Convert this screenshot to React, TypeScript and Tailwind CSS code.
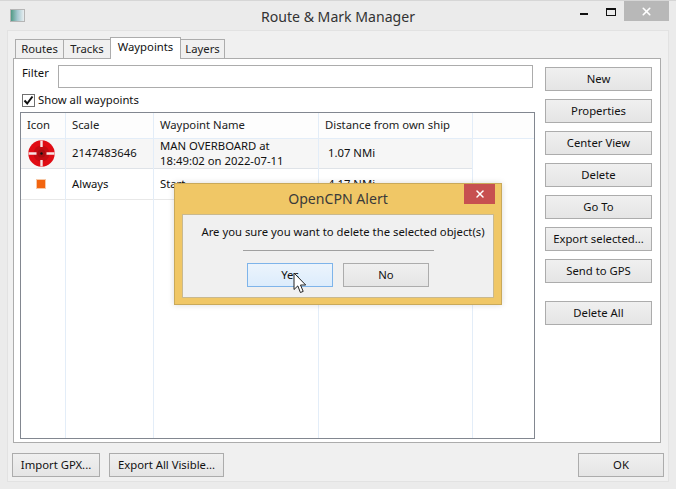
import { X } from "lucide-react";

const sideButtons = [
  { label: "New", top: "mt-0" },
  { label: "Properties", top: "mt-2" },
  { label: "Center View", top: "mt-2" },
  { label: "Delete", top: "mt-2" },
  { label: "Go To", top: "mt-2" },
  { label: "Export selected...", top: "mt-2" },
  { label: "Send to GPS", top: "mt-2" },
  { label: "Delete All", top: "mt-[18px]" },
];

function Btn({ label, className = "" }: { label: string; className?: string }) {
  return (
    <button className={`h-6 flex items-center justify-center border border-[#acacac] bg-gradient-to-b from-[#f0f0f0] to-[#e5e5e5] text-[11.3px] text-[#111] ${className}`}>
      {label}
    </button>
  );
}

function Tab({ label, active, className }: { label: string; active?: boolean; className: string }) {
  return (
    <div
      className={`flex items-center justify-center border border-[#acacac] text-[11.3px] -ml-px first:ml-0 ${
        active ? "h-[22px] bg-white border-b-0 relative z-10 pb-[3px] text-[#111]" : "h-5 bg-[#f0f0f0] text-[#222]"
      } ${className}`}
    >
      {label}
    </div>
  );
}

function Lifebuoy() {
  return (
    <svg width="27" height="27" viewBox="0 0 27 27" className="-mt-[1px]">
      <circle cx="13.5" cy="13.5" r="13.2" fill="#e00c14" />
      <circle cx="13.5" cy="13.5" r="8" fill="#c40c12" />
      <circle cx="13.5" cy="13.5" r="4" fill="#a90d10" />
      <path d="M.5 12.3h8v2.4h-8zM18.5 12.3h8v2.4h-8zM12.3.5h2.4v6.5h-2.4zM12.3 20h2.4v6.5h-2.4z" fill="#f6e4e4" />
      <circle cx="13.5" cy="13.5" r="1.2" fill="#111" />
    </svg>
  );
}

function Cursor() {
  return (
    <svg width="14" height="23" viewBox="0 0 14 23" className="absolute left-[293px] top-[272px] z-30">
      <path
        d="M1 1v16.5l3.8-3.6 2.6 6.6 2.8-1.1-2.7-6.4h5.2z"
        fill="#fff"
        stroke="#222"
        strokeWidth="1"
        strokeLinejoin="round"
      />
    </svg>
  );
}

const columns = [
  {
    head: "Icon",
    width: "w-[45px]",
    cells: [
      <div className="w-full flex justify-center pr-[4px]"><Lifebuoy /></div>,
      <div className="w-full flex justify-center pr-[4px]"><div className="w-2 h-2 bg-[#f2640f] outline outline-1 outline-[#f7c9a8]" /></div>,
    ],
  },
  { head: "Scale", width: "w-[88px]", cells: [<span className="pl-[6px]">2147483646</span>, <span className="pl-[6px]">Always</span>] },
  {
    head: "Waypoint Name",
    width: "w-[165px]",
    cells: [
      <span className="pl-[6px] leading-[15px] -mt-[1px]">MAN OVERBOARD at<br />18:49:02 on 2022-07-11</span>,
      <span className="pl-[6px]">Start</span>,
    ],
  },
  { head: "Distance from own ship", width: "w-[154px]", cells: [<span className="pl-[9px]">1.07 NMi</span>, <span className="pl-[9px]">4.17 NMi</span>] },
];

export default function App() {
  return (
    <div className="relative w-[676px] h-[489px] flex flex-col bg-[#ebebeb] overflow-hidden text-[#111] font-['Noto_Sans','Open_Sans',sans-serif]">
      {/* title bar */}
      <div className="h-[30px] flex-shrink-0 relative flex items-start justify-center border-t border-[#d6d6d6]">
        <div className="absolute left-[10px] top-[8px] w-[15px] h-[13px] border border-[#b5b5b5] bg-gradient-to-r from-[#4f9a86] via-[#a5c8d0] to-[#e8eef0]" />
        <span className="text-[14.1px] mt-[5px] text-[#333]">Route &amp; Mark Manager</span>
        <div className="absolute left-[580px] top-[12px] w-2 h-[2px] bg-[#111]" />
        <div className="absolute left-[606px] top-[7px] w-[10px] h-2 border border-[#111] border-t-2" />
        <div className="absolute left-[624px] top-0 w-[45px] h-[20px] bg-[#b8b8b8] flex items-center justify-center">
          <X size={13} strokeWidth={3} color="#fff" />
        </div>
      </div>

      {/* panel */}
      <div className="flex-1 mx-[7px] mb-[7px] bg-[#f0f0f0] border border-[#e2e2e2] pt-[7px] px-[5px] flex flex-col">
        <div className="flex items-end h-[21px] pl-[2px] relative">
          <Tab label="Routes" className="w-[49px]" />
          <Tab label="Tracks" className="w-[48px]" />
          <Tab label="Waypoints" active className="w-[71px]" />
          <Tab label="Layers" className="w-[45px]" />
        </div>

        <div className="h-[385px] w-[648px] border border-[#acacac] bg-white -mt-px ml-0 flex pl-[6px] pt-[6px]">
          <div className="w-[515px] flex flex-col">
            <div className="flex items-center h-[23px]">
              <span className="w-[38px] pl-[2px] text-[11.3px] -mt-[6px]">Filter</span>
              <div className="w-[475px] h-[23px] border border-[#acacac] bg-white" />
            </div>
            <div className="flex items-center h-[15px] mt-[5px] ml-[2px]">
              <div className="w-[13px] h-[13px] border border-[#707070] bg-white flex items-center justify-center">
                <svg width="11" height="11" viewBox="0 0 11 11">
                  <path d="M1.5 5.5 4.2 8.5 9.5 1.5" fill="none" stroke="#111" strokeWidth="2" />
                </svg>
              </div>
              <span className="text-[11.3px] ml-[3px]">Show all waypoints</span>
            </div>
            <div className="mt-[4px] h-[327px] w-[515px] border border-[#828790] flex bg-white">
              {columns.map((col) => (
                <div key={col.head} className={`${col.width} flex flex-col border-r border-[#e3edf8] text-[11.3px]`}>
                  <div className="h-[26px] flex items-center pl-[6px] border-b border-[#e3edf8] text-[#222] bg-[#fdfdfd]">{col.head}</div>
                  <div className="h-[30px] flex items-center bg-[#f6f6f6] border-b border-[#dfe3e8]">{col.cells[0]}</div>
                  <div className="h-[31px] flex items-center border-b border-[#e8e8e8]">{col.cells[1]}</div>
                </div>
              ))}
              <div className="flex-1">
                <div className="h-[26px] border-b border-[#e3edf8] bg-[#fdfdfd]" />
              </div>
            </div>
          </div>

          <div className="ml-[10px] w-[107px] flex flex-col pt-[2px]">
            {sideButtons.map((b) => (
              <Btn key={b.label} label={b.label} className={`w-[107px] ${b.top}`} />
            ))}
          </div>
        </div>

        <div className="flex mt-[10px] -ml-[1px]">
          <Btn label="Import GPX..." className="w-[88px]" />
          <Btn label="Export All Visible..." className="w-[115px] ml-[9px]" />
          <Btn label="OK" className="w-[86px] ml-auto -mr-[1px]" />
        </div>
      </div>

      {/* alert dialog */}
      <div className="absolute left-[174px] top-[183px] w-[328px] h-[122px] z-20 bg-[#f0c766] border border-[#c9a95a] flex flex-col shadow-[0_0_6px_rgba(0,0,0,0.15)]">
        <div className="h-[30px] relative flex items-start justify-center">
          <span className="text-[14.1px] mt-[4px] text-[#3a3a3a]">OpenCPN Alert</span>
          <div className="absolute right-[6px] top-0 w-[31px] h-5 bg-[#c75050] flex items-center justify-center">
            <X size={12} strokeWidth={3} color="#fff" />
          </div>
        </div>
        <div className="mx-[7px] h-[84px] bg-[#f0f0f0] border border-[#c9b98f] flex flex-col items-center">
          <span className="text-[11.3px] leading-[16px] mt-[9px] ml-[10px] whitespace-nowrap">Are you sure you want to delete the selected object(s)</span>
          <div className="w-[191px] h-px bg-[#a0a0a0] mt-[10px]" />
          <div className="flex gap-[10px] mt-[12px]">
            <button className="w-[86px] h-6 border border-[#7eb4ea] bg-gradient-to-b from-[#ecf4fc] to-[#dcecfc] text-[11.3px]">Yes</button>
            <button className="w-[86px] h-6 border border-[#acacac] bg-gradient-to-b from-[#f0f0f0] to-[#e5e5e5] text-[11.3px]">No</button>
          </div>
        </div>
      </div>
      <Cursor />
    </div>
  );
}
